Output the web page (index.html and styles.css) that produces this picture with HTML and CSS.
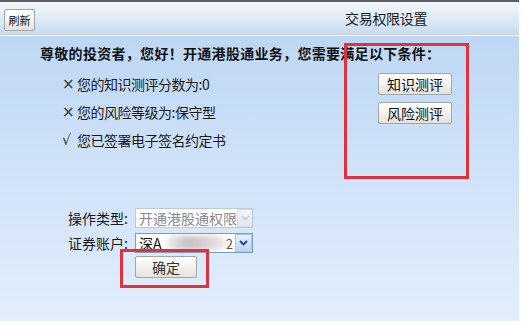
FILE: index.html
```html
<!DOCTYPE html>
<html lang="zh-CN">
<head>
<meta charset="utf-8">
<title>交易权限设置</title>
<link rel="stylesheet" href="styles.css">
</head>
<body>
<div class="app">
  <div class="header">
    <button class="btn refresh">刷新</button>
    <div class="title">交易权限设置</div>
  </div>
  <div class="main">
    <div class="heading">尊敬的投资者，您好！开通港股通业务，您需要满足以下条件：</div>
    <div class="conditions">
      <ul class="list">
        <li><span class="mark">×</span><span>您的知识测评分数为:0</span></li>
        <li><span class="mark">×</span><span>您的风险等级为:保守型</span></li>
        <li><span class="mark check">√</span><span>您已签署电子签名约定书</span></li>
      </ul>
      <div class="actions">
        <button class="btn action">知识测评</button>
        <button class="btn action">风险测评</button>
      </div>
    </div>
    <div class="form">
      <div class="row">
        <span class="label">操作类型:</span>
        <div class="select disabled">
          <span class="value">开通港股通权限</span>
          <span class="arrow"><svg width="9" height="6" viewBox="0 0 9 6"><path d="M1 1 L4.5 4.5 L8 1" fill="none" stroke="#c6cfd9" stroke-width="1.6"/></svg></span>
        </div>
      </div>
      <div class="row">
        <span class="label">证券账户:</span>
        <div class="select">
          <span class="value">深A</span>
          <span class="blur"></span>
          <span class="tail">2</span>
          <span class="arrow active"><svg width="9" height="6" viewBox="0 0 9 6"><path d="M1 1 L4.5 4.5 L8 1" fill="none" stroke="#1f3f8a" stroke-width="1.8"/></svg></span>
        </div>
      </div>
      <div class="row submit">
        <button class="btn confirm">确定</button>
      </div>
    </div>
    <div class="mark-box box-actions"></div>
    <div class="mark-box box-confirm"></div>
  </div>
</div>
</body>
</html>
```
FILE: styles.css
```css
* { box-sizing: border-box; }
html, body { margin: 0; padding: 0; background: #ffffff; }
body {
  font-family: "Noto Sans CJK SC", "DejaVu Sans", sans-serif;
  color: #111;
  width: 528px;
  height: 325px;
  overflow: hidden;
}
.app {
  width: 519px;
  height: 321px;
  border-top: 2px solid #5d6166;
  display: flex;
  flex-direction: column;
}
.header {
  height: 33px;
  display: flex;
  align-items: center;
  padding: 0 4px;
  background: linear-gradient(#f3f7fc, #dde9f6 55%, #c9dcf1);
  border-bottom: 1px solid #c8d0d9;
  box-shadow: 0 1px 0 #ffffff;
  flex: none;
}
.btn {
  font-family: "Noto Sans CJK SC", sans-serif;
  border: 1px solid #9ea6ae;
  border-radius: 2px;
  background: linear-gradient(#ffffff, #f4f2ec 50%, #e6e2d8);
  color: #111;
  padding: 0;
  cursor: default;
}
.refresh {
  width: 31px;
  height: 22px;
  font-size: 11px;
  line-height: 20px;
  margin-top: 4px;
}
.title {
  margin-left: 310px;
  font-size: 14px;
  line-height: 18px;
  letter-spacing: -0.3px;
  color: #1a1a1a;
}
.main {
  position: relative;
  flex: 1;
  margin-top: 1px;
  padding: 8px 0 0 40px;
  background: linear-gradient(#bdd7f4, #cfe2f8 45%, #e2eefc);
}
.heading {
  font-size: 14px;
  font-weight: bold;
  line-height: 18px;
  letter-spacing: 0.3px;
  color: #111;
}
.conditions {
  display: flex;
  margin-top: 8px;
}
.list {
  list-style: none;
  margin: 0;
  padding: 0 0 0 22px;
  width: 338px;
}
.list li {
  display: flex;
  align-items: center;
  height: 28px;
  font-size: 14px;
  line-height: 28px;
  color: #1a1a1a;
  letter-spacing: -0.5px;
  white-space: nowrap;
}
.mark {
  flex: none;
  width: 15px;
  font-family: "DejaVu Sans", sans-serif;
  font-size: 15px;
  line-height: 28px;
  color: #333;
}
.mark.check { font-size: 14px; }
.actions {
  display: flex;
  flex-direction: column;
  gap: 7px;
  padding-top: 3px;
}
.action {
  width: 74px;
  height: 22px;
  font-size: 14px;
  line-height: 20px;
}
.form {
  margin-top: 54px;
  padding-left: 28px;
  display: flex;
  flex-direction: column;
  gap: 5px;
}
.row {
  display: flex;
  align-items: center;
  height: 20px;
}
.label {
  width: 67px;
  font-size: 14px;
  line-height: 20px;
  color: #1a1a1a;
}
.select {
  position: relative;
  width: 118px;
  height: 20px;
  border: 1px solid #7f9db9;
  background: #fff;
  display: flex;
  align-items: center;
  padding-left: 3px;
  overflow: hidden;
}
.select.disabled { border-color: #bccad8; }
.select .value {
  font-size: 14px;
  line-height: 18px;
  white-space: nowrap;
}
.select.disabled .value { color: #8a8a8a; }
.select .blur {
  width: 64px;
  height: 14px;
  margin-left: 4px;
  border-radius: 7px;
  background: linear-gradient(90deg, #eeeeee, #c4c4c4 35%, #d8c9d0 60%, #ececec);
  filter: blur(2.5px);
}
.select .tail {
  margin-left: auto;
  font-size: 13px;
  color: #555;
  margin-right: 2px;
}
.arrow {
  margin-left: auto;
  width: 17px;
  height: 18px;
  flex: none;
  display: flex;
  align-items: center;
  justify-content: center;
  background: linear-gradient(#f2f5f8, #e3e8ee);
  border: 1px solid #d3dbe4;
}
.arrow.active {
  margin-left: 0;
  background: linear-gradient(#e6effc, #bed3f3);
  border-color: #b0c6e6;
}
.submit { height: 22px; margin-top: -2px; }
.confirm {
  margin-left: 67px;
  width: 62px;
  height: 22px;
  font-size: 14px;
  line-height: 20px;
  color: #333;
}
.mark-box {
  position: absolute;
  border: 3px solid #e0323c;
}
.box-actions {
  left: 344px;
  top: 7px;
  width: 125px;
  height: 136px;
}
.box-confirm {
  left: 120px;
  top: 213px;
  width: 89px;
  height: 39px;
}
```
